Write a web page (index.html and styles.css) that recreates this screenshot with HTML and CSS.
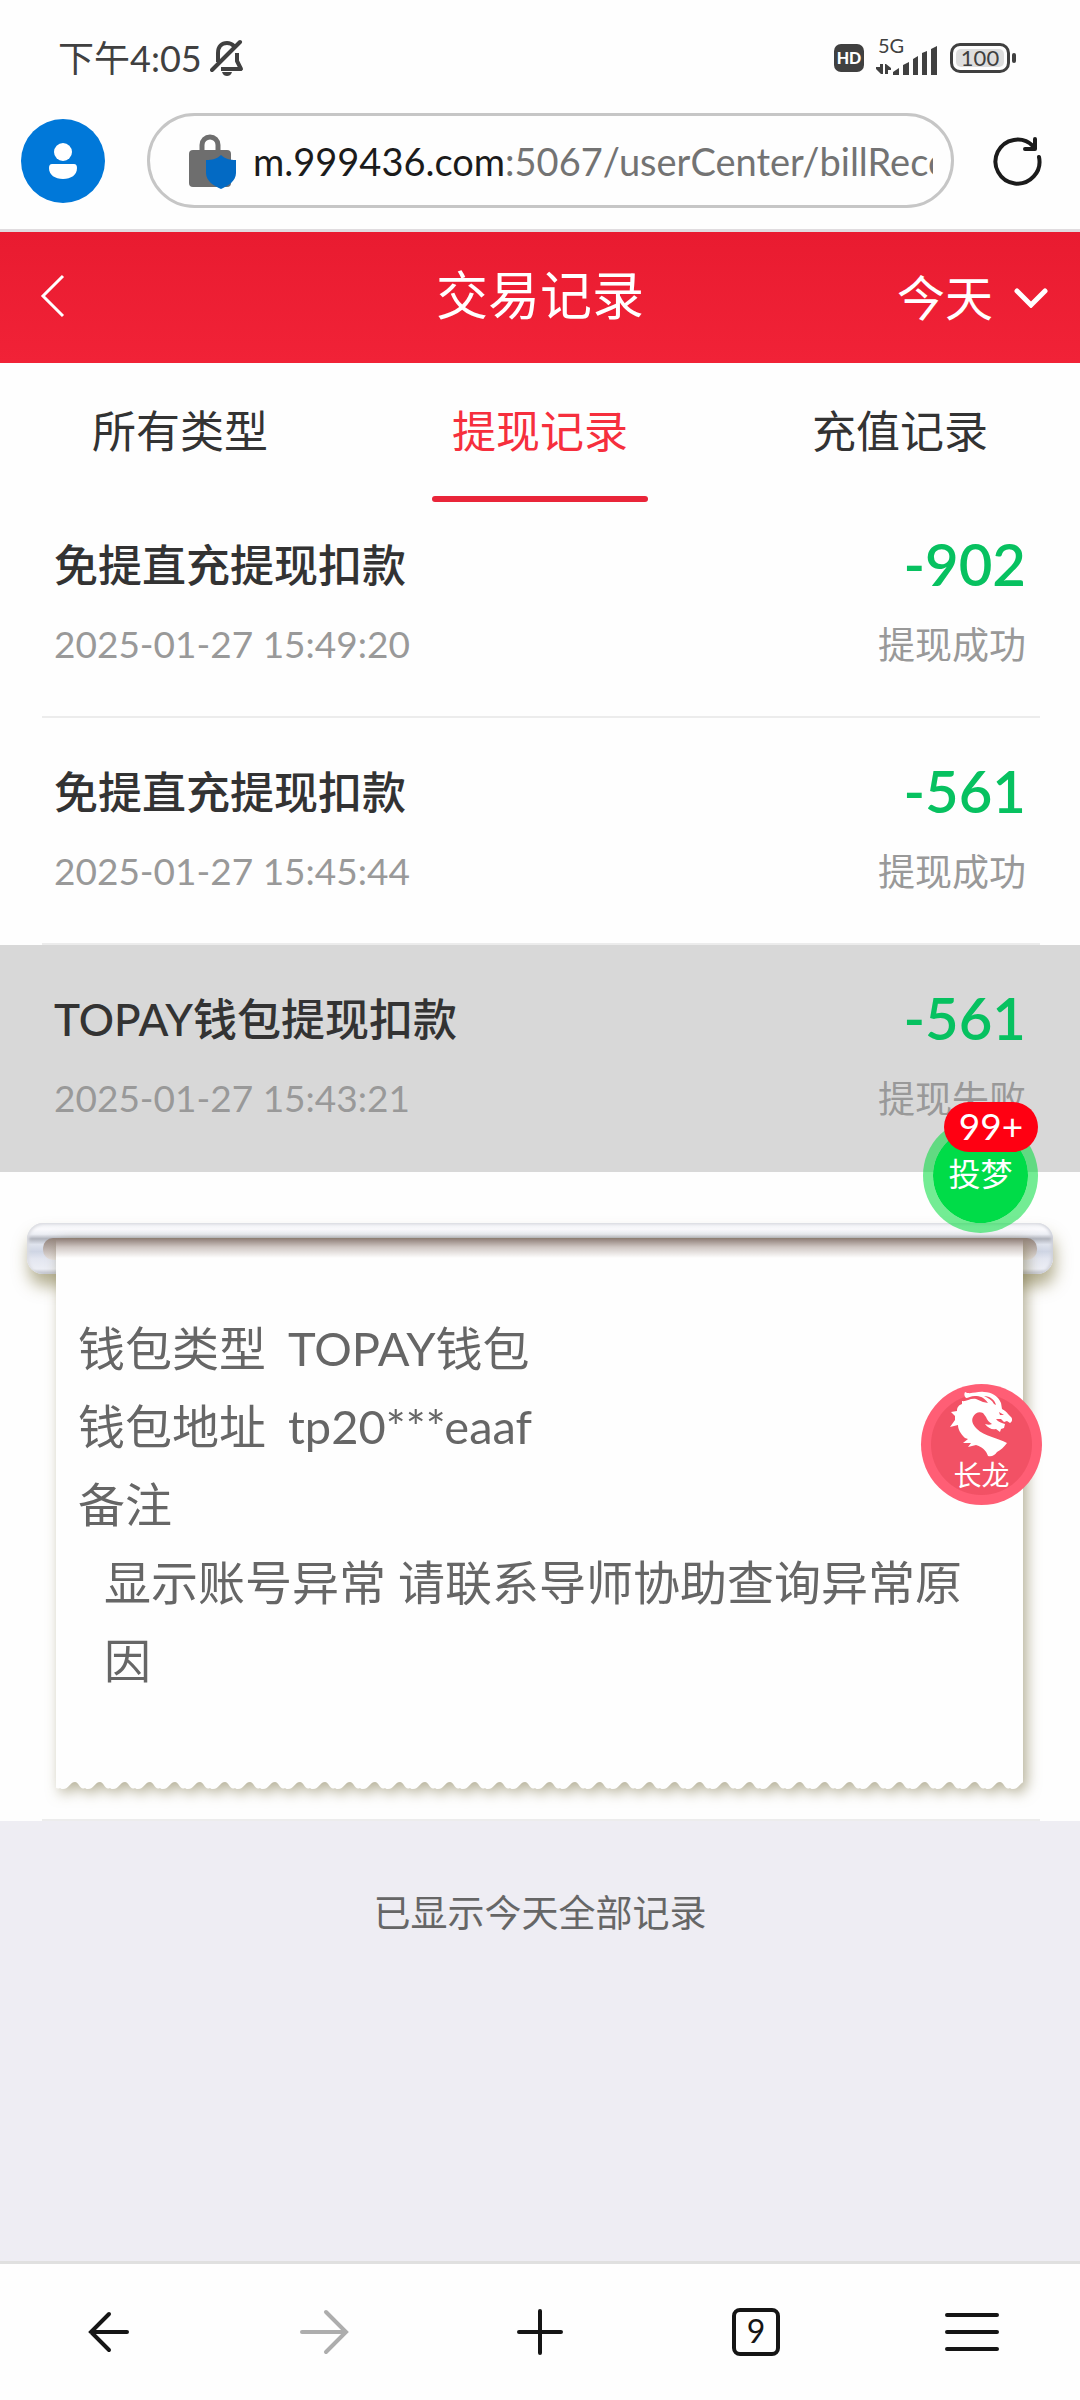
FILE: index.html
```html
<!DOCTYPE html>
<html lang="zh-CN">
<head>
  <meta charset="UTF-8">
  <title>交易记录</title>
  <meta name="viewport" content="width=device-width, initial-scale=1.0">
  <link rel="stylesheet" href="styles.css">
</head>
<body>
  <div class="status-bar">
    <span class="clock">下午4:05</span>
    <svg class="mute" width="34" height="38" viewBox="0 0 34 38" fill="none" stroke="#404040" stroke-width="4">
      <path d="M8 23V14C8 7 12 4 17 4C20 4 22 5 24 7"/>
      <path d="M27 14V22L31 30H11" stroke-linejoin="round"/>
      <path d="M2 31L30 3" stroke-linecap="round"/>
      <path d="M12 33H22C21 36 19 37 17 37S13 36 12 33Z" fill="#404040" stroke="none"/>
    </svg>
    <div class="status-right">
      <span class="hd">HD</span>
      <div class="signal">
        <span class="net">5G</span>
        <svg width="62" height="34" viewBox="0 0 62 34" fill="#404040">
          <path d="M4 23H7V33H5L0 28V26H4ZM9 23H10L15 27V29H12V33H9Z"/>
          <path d="M17 34V31L23 27V34ZM27 34V24L33 21V34ZM37 34V18L42 15V34ZM46 34V12L51 10V34ZM55 34V8L61 5V34Z"/>
        </svg>
      </div>
      <span class="battery"><span>100</span></span>
    </div>
  </div>

  <div class="address-bar">
    <button class="avatar" aria-label="账户">
      <svg width="84" height="84" viewBox="0 0 84 84" fill="#fff">
        <circle cx="42" cy="33" r="9"/>
        <path d="M31 45H53Q56 45 56 49C56 56 50 60 42 60S28 56 28 49Q28 45 31 45Z"/>
      </svg>
    </button>
    <button class="url">
      <svg width="48" height="56" viewBox="0 0 48 56">
        <path d="M13 20V12a8 8 0 0 1 16 0V20" fill="none" stroke="#6e6e6e" stroke-width="5"/>
        <rect x="0" y="17" width="42" height="37" rx="4" fill="#6e6e6e"/>
        <path d="M32 22C36 26 41 27 47 27V40C47 48 39 53 32 56C25 53 17 48 17 40V27C23 27 28 26 32 22Z" fill="#036ac4"/>
      </svg>
      <span class="url-text"><b>m.999436.com</b>:5067/userCenter/billRecord</span>
    </button>
    <button class="reload" aria-label="刷新">
      <svg width="52" height="52" viewBox="0 0 52 52" fill="none" stroke="#1b1b1b" stroke-width="4" stroke-linecap="round" stroke-linejoin="round">
        <path d="M48 22A22 22 0 1 1 42 11"/>
        <path d="M44 4V14H34"/>
      </svg>
    </button>
  </div>

  <header class="page-head">
    <a class="back" href="#" aria-label="返回">
      <svg width="26" height="44" viewBox="0 0 26 44" fill="none" stroke="#fff" stroke-width="3"><path d="M24 2L4 22L24 42"/></svg>
    </a>
    <h1>交易记录</h1>
    <label class="day">
      <select aria-label="日期">
        <option>今天</option>
        <option>昨天</option>
      </select>
      <svg width="34" height="20" viewBox="0 0 34 20" fill="none" stroke="#fff" stroke-width="5" stroke-linecap="round"><path d="M3 3L17 17L31 3"/></svg>
    </label>
  </header>

  <nav class="tabs">
    <a href="#">所有类型</a>
    <a href="#" class="active">提现记录</a>
    <a href="#">充值记录</a>
  </nav>

  <main>
    <ul class="records">
      <li class="record">
        <div class="line"><span class="name">免提直充提现扣款</span><span class="amount">-902</span></div>
        <div class="line"><time>2025-01-27 15:49:20</time><span class="state">提现成功</span></div>
      </li>
      <li class="record">
        <div class="line"><span class="name">免提直充提现扣款</span><span class="amount">-561</span></div>
        <div class="line"><time>2025-01-27 15:45:44</time><span class="state">提现成功</span></div>
      </li>
      <li class="record selected">
        <div class="line"><span class="name">TOPAY钱包提现扣款</span><span class="amount">-561</span></div>
        <div class="line"><time>2025-01-27 15:43:21</time><span class="state">提现失败</span></div>
      </li>
    </ul>

    <section class="receipt">
      <div class="rod"></div>
      <div class="paper">
        <dl>
          <div><dt>钱包类型</dt><dd>TOPAY钱包</dd></div>
          <div><dt>钱包地址</dt><dd>tp20***eaaf</dd></div>
          <div><dt>备注</dt></div>
        </dl>
        <p>显示账号异常 请联系导师协助查询异常原因</p>
        <svg class="wave" width="100%" height="9">
          <defs>
            <pattern id="wave" x="4" width="25" height="9" patternUnits="userSpaceOnUse">
              <path d="M0 0H25V7C20 10 19 1 15 1C10 1 9 8 3 8C2 8 1 8 0 7Z" fill="#fefefe"/>
            </pattern>
          </defs>
          <rect width="100%" height="9" fill="url(#wave)"/>
        </svg>
      </div>
    </section>

    <p class="end">已显示今天全部记录</p>
  </main>

  <button class="float chat">投梦<span class="badge">99+</span></button>
  <button class="float dragon">
    <svg width="64" height="66" viewBox="0 0 64 66" fill="#fff">
      <path d="M16 7C14 5 14 3 15 1C20 4 27 0 34 1C42 1 48 5 51 12L52 18C55 20 57 21 58 23L61 26C63 28 62 31 60 32L57 30L54 31L51 28L46 28C48 31 52 32 55 33L54 37L51 38L50 41L46 38C42 39 38 37 35 33C38 34 40 34 42 33C39 31 37 29 36 26L33 22C29 20 25 22 23 26C21 30 23 34 27 38C34 45 48 47 57 52C54 56 51 59 47 61C45 64 42 66 38 65C36 59 32 56 26 54L18 56L21 52L13 52L18 48L15 47C10 42 8 38 8 34L0 36L5 29L5 25L1 21L7 20C7 16 9 14 12 13L12 10C16 11 20 7 26 8L33 11L38 12C34 6 30 5 25 5C21 5 18 7 16 7Z"/>
      <path d="M34 5C40 5 45 9 46 14L44 13C42 9 38 7 34 5ZM49 21L54 24L50 24Z" fill="#f25165"/>
    </svg>
    <span>长龙</span>
  </button>

  <nav class="toolbar">
    <button aria-label="后退">
      <svg width="54" height="54" viewBox="0 0 54 54"><path d="M46 27H10M28 9L10 27L28 45"/></svg>
    </button>
    <button class="off" aria-label="前进" disabled>
      <svg width="54" height="54" viewBox="0 0 54 54"><path d="M5 27H49M29 7L49 27L29 47"/></svg>
    </button>
    <button aria-label="新建标签页">
      <svg width="54" height="54" viewBox="0 0 54 54"><path d="M6 27H48M27 6V48"/></svg>
    </button>
    <button aria-label="标签页"><span class="count">9</span></button>
    <button aria-label="菜单">
      <svg width="54" height="54" viewBox="0 0 54 54"><path d="M2 10H52M2 27H52M2 44H52"/></svg>
    </button>
  </nav>
</body>
</html>
```
FILE: styles.css
```css
* {
  box-sizing: border-box;
}
body {
  display: flex;
  flex-direction: column;
  min-height: 100vh;
  margin: 0;
  background-color: #fefefe;
  color: #333;
  font-family: Lato, "Noto Sans CJK SC", sans-serif;
  position: relative;
}
button, select {
  padding: 0;
  border: 0;
  background: none;
  color: inherit;
  font: inherit;
  appearance: none;
}
a {
  color: inherit;
  text-decoration: none;
}
svg {
  display: block;
}

/* status bar */
.status-bar {
  display: flex;
  align-items: center;
  height: 114px;
  padding: 2px 64px 0 58px;
  color: #404040;
}
.clock {
  font-size: 36px;
  line-height: 40px;
}
.mute {
  margin-left: 8px;
}
.status-right {
  display: flex;
  align-items: center;
  gap: 12px;
  margin-left: auto;
}
.hd {
  width: 30px;
  height: 28px;
  border-radius: 7px;
  background-color: #404040;
  color: #fff;
  font-size: 16px;
  font-weight: 900;
  line-height: 28px;
  text-align: center;
}
.signal {
  position: relative;
}
.net {
  position: absolute;
  top: -8px;
  left: 2px;
  font-size: 20px;
  line-height: 24px;
}
.battery {
  position: relative;
  width: 60px;
  height: 30px;
  margin-right: 6px;
  padding: 3px;
  border: 3px solid #404040;
  border-radius: 10px;
}
.battery span {
  display: block;
  border-radius: 5px;
  background-color: #dedede;
  font-size: 22px;
  line-height: 18px;
  text-align: center;
}
.battery::after {
  content: "";
  position: absolute;
  top: 7px;
  right: -9px;
  width: 4px;
  height: 10px;
  border-radius: 2px;
  background-color: #404040;
}

/* address bar */
.address-bar {
  display: flex;
  align-items: center;
  height: 118px;
  padding: 0 37px 22px 21px;
  border-bottom: 3px solid #e0dcdf;
}
.avatar {
  height: 84px;
  border-radius: 50%;
  background-color: #0078d9;
}
.url {
  display: flex;
  flex: 1;
  align-items: center;
  gap: 16px;
  min-width: 0;
  height: 95px;
  margin: 0 37px 0 42px;
  padding: 0 18px 0 39px;
  border: 3px solid #c6c6c6;
  border-radius: 48px;
  color: #737373;
  font-size: 38px;
}
.url svg {
  flex: none;
}
.url-text {
  overflow: hidden;
  white-space: nowrap;
}
.url b {
  color: #1b1b1b;
  font-weight: 400;
}

/* page header */
.page-head {
  display: grid;
  grid-template-columns: 1fr auto 1fr;
  align-items: center;
  height: 131px;
  padding: 0 32px;
  background: linear-gradient(#e91b30, #f12237);
  color: #fff;
}
.back {
  margin: 0 0 4px 7px;
}
.page-head h1 {
  margin: 0 0 6px;
  font-size: 52px;
  font-weight: 400;
  line-height: 60px;
}
.day {
  display: flex;
  align-items: center;
  justify-content: flex-end;
  gap: 20px;
}
.day select {
  font-size: 48px;
  line-height: 60px;
}

/* type tabs */
.tabs {
  display: flex;
  height: 128px;
  font-size: 44px;
  line-height: 136px;
  text-align: center;
}
.tabs a {
  position: relative;
  flex: 1;
}
.tabs .active {
  color: #f62f3d;
}
.tabs .active::after {
  content: "";
  position: absolute;
  bottom: -11px;
  left: 20%;
  width: 60%;
  height: 6px;
  border-radius: 3px;
  background-color: #e92539;
}

/* records */
main {
  flex: 1;
  background-color: #eeedf3;
}
.records {
  margin: 0;
  padding: 0;
  list-style: none;
  background-color: #fefefe;
}
.record {
  position: relative;
  height: 227px;
  padding: 32px 54px 0 54px;
}
.record:not(.selected)::after, .receipt::after {
  content: "";
  position: absolute;
  right: 40px;
  bottom: 0;
  left: 42px;
  height: 2px;
  background-color: #ececec;
}
.selected {
  background-color: #d8d8d8;
}
.line {
  display: flex;
  align-items: center;
  justify-content: space-between;
  height: 80px;
}
.name {
  font-size: 44px;
  font-weight: 500;
}
.amount {
  color: #07c160;
  font-size: 58px;
  font-weight: 600;
}
time, .state {
  color: #999;
  font-size: 37px;
}

/* receipt */
.receipt {
  position: relative;
  padding: 51px 27px 40px;
  background-color: #fefefe;
}
.rod {
  position: relative;
  height: 51px;
  border-radius: 16px;
  background: linear-gradient(#eeeff3, #fafafd 12%, #eceef4 22%, #b0b3bc 31%, #dfe3ed 42%, #cfd5e4 56%, #e3e6f0 70%, #eceef5 90%, #b9bbc4);
  box-shadow: 2px 12px 16px rgba(110, 100, 40, 0.5), inset 2px 1px 3px #dcdde2, inset -2px 0 3px #cfd1da;
}
.rod::before {
  content: "";
  position: absolute;
  inset: 15px 16px 14px;
  border-radius: 10px;
  background: linear-gradient(#92827b, #e9e4e2);
}
.paper {
  position: relative;
  margin: -35px 30px 0 29px;
  padding: 70px 39px 82px 22px;
  background: linear-gradient(#92827b, #cfc6c2 8px, #fefefe 19px);
  color: #666;
  font-size: 47px;
  line-height: 78px;
  filter: drop-shadow(4px 4px 7px rgba(110, 100, 50, 0.5));
}
.paper dl, .paper dd, .paper p {
  margin: 0;
}
.paper dl div {
  display: flex;
  gap: 22px;
}
.paper p {
  padding-left: 26px;
}
.wave {
  position: absolute;
  top: 100%;
  left: 0;
}
.end {
  margin: 0;
  padding: 62px 0;
  color: #666;
  font-size: 37px;
  line-height: 60px;
  text-align: center;
}

/* floating buttons */
.float {
  position: absolute;
  border-radius: 50%;
  color: #fff;
}
.chat {
  top: 1118px;
  right: 42px;
  width: 115px;
  height: 115px;
  padding-bottom: 8px;
  border: 10px solid rgba(0, 220, 60, 0.55);
  background-color: #00dc48;
  background-clip: padding-box;
  font-size: 32px;
}
.badge {
  position: absolute;
  top: -26px;
  right: -10px;
  width: 94px;
  height: 50px;
  border-radius: 25px;
  background-color: #ff0012;
  font-size: 37px;
  line-height: 48px;
}
.dragon {
  display: flex;
  flex-direction: column;
  align-items: center;
  top: 1384px;
  right: 38px;
  width: 121px;
  height: 121px;
  padding-top: 7px;
  background: radial-gradient(circle, #f25165 50px, #ff5e75 51px);
  font-size: 28px;
  line-height: 36px;
}

/* browser toolbar */
.toolbar {
  display: flex;
  height: 139px;
  border-top: 3px solid #e0e0e0;
  background-color: #fefefe;
}
.toolbar button {
  display: flex;
  flex: 1;
  align-items: center;
  justify-content: center;
  color: #151515;
}
.toolbar .off {
  color: #adadad;
}
.toolbar svg {
  fill: none;
  stroke: currentColor;
  stroke-width: 4;
  stroke-linecap: round;
}
.count {
  width: 48px;
  height: 48px;
  border: 4px solid #151515;
  border-radius: 8px;
  font-size: 32px;
  line-height: 38px;
}
```
